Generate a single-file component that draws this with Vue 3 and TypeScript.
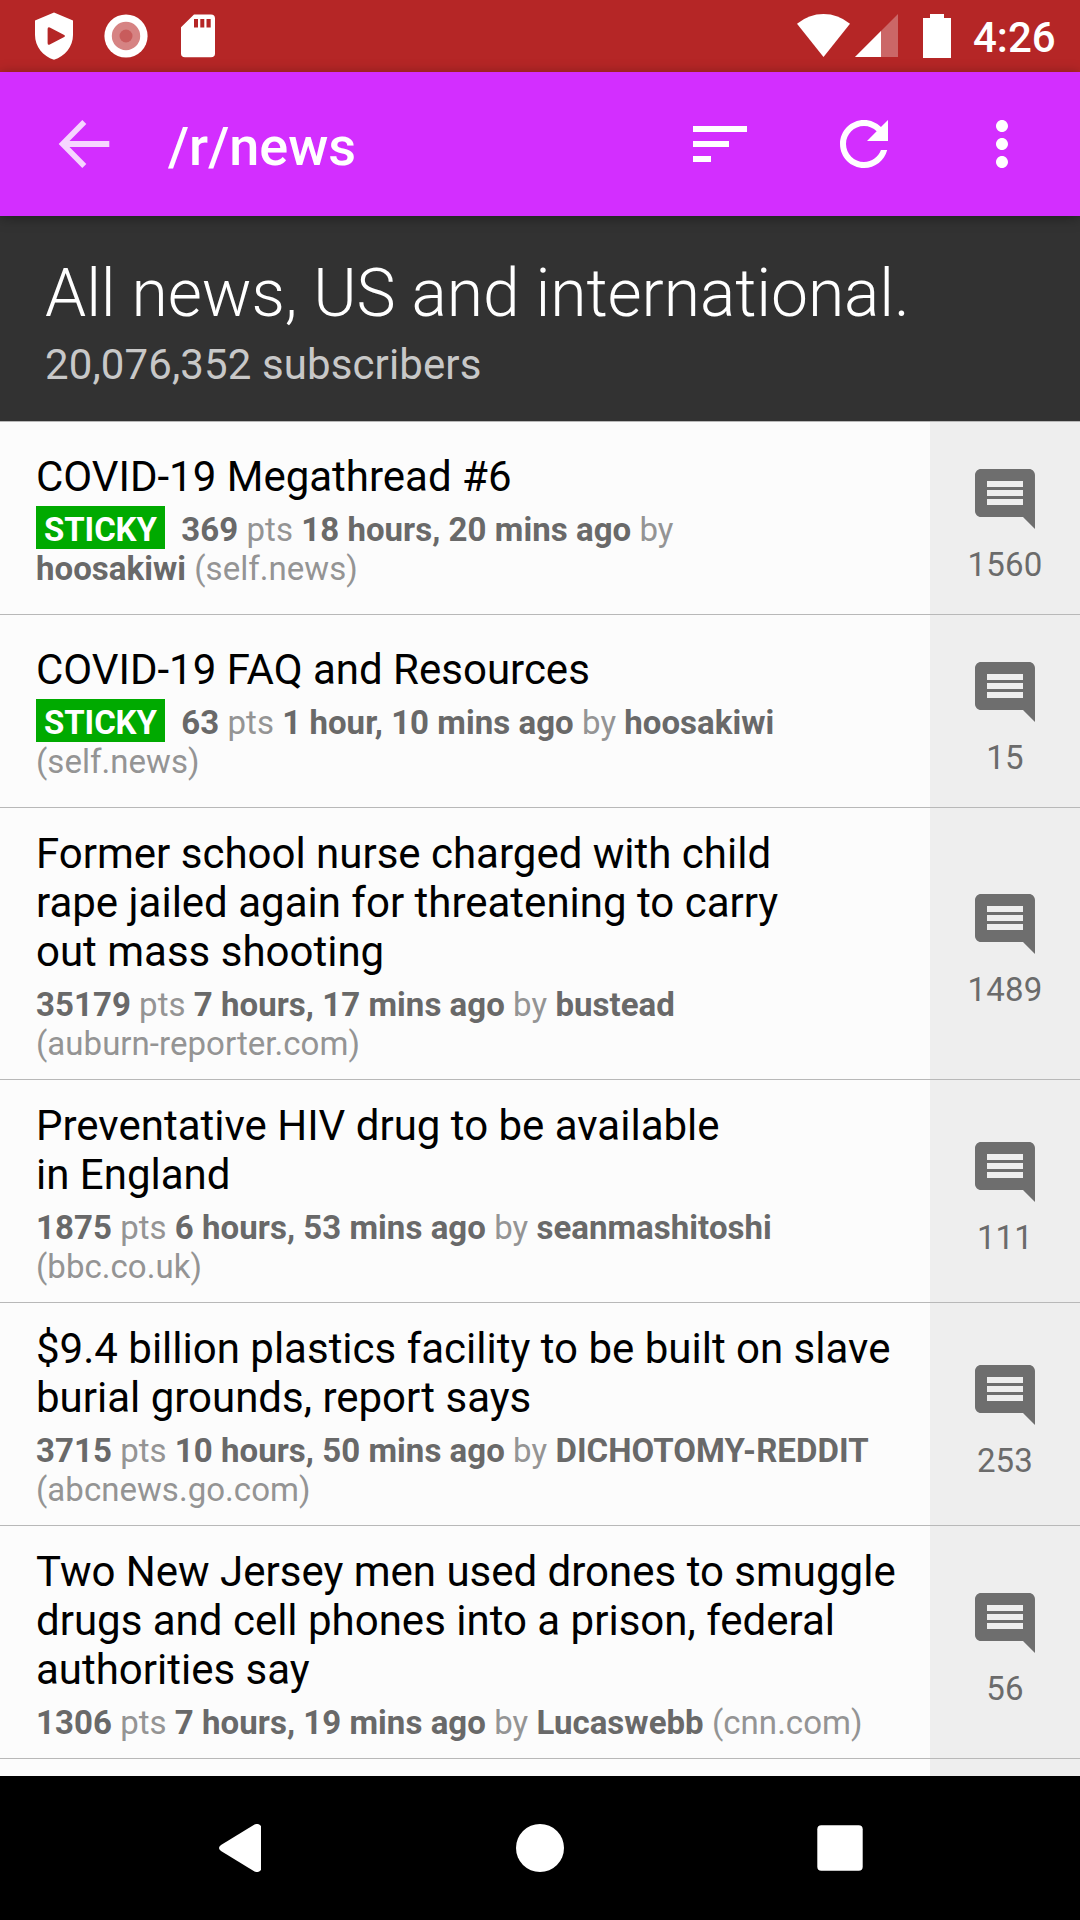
<script setup lang="ts">
interface Post {
  title: string[]
  sticky?: boolean
  points: number
  age: string
  author: string
  domain: string
  comments: number
  breakBefore?: 'author' | 'domain'
}

const posts: Post[] = [
  { title: ['COVID-19 Megathread #6'], sticky: true, points: 369, age: '18 hours, 20 mins ago', author: 'hoosakiwi', domain: 'self.news', comments: 1560, breakBefore: 'author' },
  { title: ['COVID-19 FAQ and Resources'], sticky: true, points: 63, age: '1 hour, 10 mins ago', author: 'hoosakiwi', domain: 'self.news', comments: 15, breakBefore: 'domain' },
  { title: ['Former school nurse charged with child', 'rape jailed again for threatening to carry', 'out mass shooting'], points: 35179, age: '7 hours, 17 mins ago', author: 'bustead', domain: 'auburn-reporter.com', comments: 1489, breakBefore: 'domain' },
  { title: ['Preventative HIV drug to be available', 'in England'], points: 1875, age: '6 hours, 53 mins ago', author: 'seanmashitoshi', domain: 'bbc.co.uk', comments: 111, breakBefore: 'domain' },
  { title: ['$9.4 billion plastics facility to be built on slave', 'burial grounds, report says'], points: 3715, age: '10 hours, 50 mins ago', author: 'DICHOTOMY-REDDIT', domain: 'abcnews.go.com', comments: 253, breakBefore: 'domain' },
  { title: ['Two New Jersey men used drones to smuggle', 'drugs and cell phones into a prison, federal', 'authorities say'], points: 1306, age: '7 hours, 19 mins ago', author: 'Lucaswebb', domain: 'cnn.com', comments: 56 },
]
</script>

<template>
  <div class="screen">
    <div class="status">
      <svg class="shield" width="40" height="72" viewBox="34 0 40 72">
        <path fill="#fff" fill-rule="evenodd" d="M54 12.6 73 20.5V35C73 46.500 65 56.500 54 59.700 43 56.500 35 46.500 35 35V20.500ZM49.800 27.400Q47.600 26.500 47.600 29V43Q47.600 45.500 49.800 44.600L64.200 37Q66 36 64.200 35Z" />
      </svg>
      <svg class="record" width="44" height="72" viewBox="104 0 44 72">
        <circle cx="126" cy="36" r="21.600" fill="#fff" />
        <circle cx="126" cy="36" r="14.200" fill="#d68383" />
        <circle cx="126" cy="36" r="6.500" fill="#c85c5c" />
      </svg>
      <svg class="sd" width="36" height="72" viewBox="180 0 36 72">
        <path fill="#fff" fill-rule="evenodd" d="M194 14.500H211Q215 14.500 215 18.500V53.500Q215 57.300 211 57.300H185Q181 57.300 181 53.500V27.300ZM194 19V27.500H198V19ZM200.300 19V27.500H204.300V19ZM206.500 19V27.500H210.700V19Z" />
      </svg>
      <svg class="wifi" width="54" height="72" viewBox="797 0 54 72">
        <path fill="#fff" d="M797 23.700Q809 14 823.500 14T850 23.700L823.500 57Z" />
      </svg>
      <svg class="signal" width="44" height="72" viewBox="855 0 44 72">
        <path fill="#fff" fill-opacity=".3" d="M898 14V57H855Z" />
        <path fill="#fff" d="M881 31V57H855Z" />
      </svg>
      <svg class="battery" width="28" height="72" viewBox="923 0 28 72">
        <path fill="#fff" d="M930 14H944V18H951V58H923V18H930Z" />
      </svg>
      <span class="clock">4:26</span>
    </div>

    <header class="toolbar">
      <svg class="back" width="52" height="48" viewBox="0 0 52 48">
        <path fill="#fff" fill-opacity=".8" d="M24.300 0 28.300 4 11.500 21H51.300V27H11.500L28.300 44 24.300 48 .7 24Z" />
      </svg>
      <h1>/r/news</h1>
      <svg class="sort" width="72" height="72" viewBox="0 0 24 24">
        <path fill="#fff" d="M3 18h6v-2H3v2zM3 6v2h18V6H3zm0 7h12v-2H3v2z" />
      </svg>
      <svg class="refresh" width="72" height="72" viewBox="0 0 24 24">
        <path fill="#fff" d="M17.650 6.350C16.200 4.900 14.210 4 12 4c-4.420 0-7.990 3.580-7.990 8s3.570 8 7.990 8c3.730 0 6.840-2.550 7.730-6h-2.080c-.82 2.330-3.040 4-5.650 4-3.310 0-6-2.690-6-6s2.690-6 6-6c1.660 0 3.140.69 4.220 1.780L13 11h7V4l-2.350 2.350z" />
      </svg>
      <svg class="more" width="72" height="72" viewBox="0 0 24 24">
        <path fill="#fff" d="M12 8c1.100 0 2-.9 2-2s-.9-2-2-2-2 .9-2 2 .9 2 2 2zm0 2c-1.100 0-2 .9-2 2s.9 2 2 2 2-.9 2-2-.9-2-2-2zm0 6c-1.100 0-2 .9-2 2s.9 2 2 2 2-.9 2-2-.9-2-2-2z" />
      </svg>
    </header>

    <section class="banner">
      <div class="headline">All news, US and international.</div>
      <div class="subs">20,076,352 subscribers</div>
    </section>

    <main class="list">
      <article v-for="post in posts" :key="post.title[0]" class="row">
        <div class="body">
          <h2><span v-for="line in post.title" :key="line" class="line">{{ line }}</span></h2>
          <p class="meta">
            <template v-if="post.sticky"><span class="sticky">&nbsp;STICKY&nbsp;</span>&nbsp;&nbsp;</template><b>{{ post.points }}</b> pts <b>{{ post.age }}</b> by <br v-if="post.breakBefore === 'author'"><b>{{ post.author }}</b>{{ ' ' }}<br v-if="post.breakBefore === 'domain'">({{ post.domain }})
          </p>
        </div>
        <div class="comments">
          <svg width="72" height="72" viewBox="0 0 24 24">
            <path fill="#6e6e6e" d="M21.990 4c0-1.100-.89-2-1.990-2H4c-1.100 0-2 .9-2 2v12c0 1.100.9 2 2 2h14l4 4-.010-18zM18 14H6v-2h12v2zm0-3H6V9h12v2zm0-3H6V6h12v2z" />
          </svg>
          <span>{{ post.comments }}</span>
        </div>
      </article>
      <div class="row stub">
        <div class="body"></div>
        <div class="comments"></div>
      </div>
    </main>

    <nav class="nav">
      <svg width="48" height="48" viewBox="0 0 48 48">
        <path fill="#fff" d="M38.500 .5Q42.500 -1.200 45 2V46Q42.500 49.200 38.500 47.500L5 27Q1 24 5 21Z" />
      </svg>
      <svg width="48" height="48" viewBox="0 0 48 48"><circle cx="24" cy="24" r="24" fill="#fff" /></svg>
      <svg width="48" height="48" viewBox="0 0 48 48"><rect x="1.300" y="1.300" width="45.400" height="45.400" rx="4" fill="#fff" /></svg>
    </nav>
  </div>
</template>

<style>
body {
  margin: 0;
}
</style>

<style scoped>
.screen {
  width: 1080px;
  height: 1920px;
  display: flex;
  flex-direction: column;
  overflow: hidden;
  background: #fcfcfc;
  font-family: Roboto, "Noto Sans", sans-serif;
}
svg {
  display: block;
  flex: none;
}
.status {
  height: 72px;
  flex: none;
  display: flex;
  background: #b52626;
}
.shield { margin-left: 34px; }
.record { margin-left: 30px; }
.sd { margin-left: 32px; }
.wifi { margin-left: auto; }
.signal { margin-left: 4px; }
.battery { margin-left: 24px; }
.clock {
  width: 107px;
  margin-left: 22px;
  color: #fff;
  font-size: 42px;
  font-weight: 500;
  line-height: 49px;
  padding-top: 13px;
}
.toolbar {
  position: relative;
  z-index: 1;
  height: 144px;
  flex: none;
  display: flex;
  align-items: center;
  background: #d32eff;
  box-shadow: 0 2px 12px rgba(0, 0, 0, .35);
}
.back { margin-left: 58px; }
h1 {
  flex: 1;
  margin: 5px 0 0 58px;
  color: #fff;
  font-size: 54px;
  font-weight: 500;
  line-height: 64px;
}
.refresh { margin-left: 72px; }
.more { margin: 0 42px 0 66px; }
.banner {
  height: 205px;
  flex: none;
  box-sizing: border-box;
  padding: 39px 45px 0;
  background: #323232;
}
.headline {
  color: #fff;
  font-size: 66px;
  font-weight: 300;
  line-height: 77px;
  letter-spacing: -.11px;
}
.subs {
  margin-top: 8px;
  color: #c8c8c8;
  font-size: 42px;
  line-height: 49px;
  letter-spacing: .11px;
}
.list {
  flex: 1;
  min-height: 0;
  display: flex;
  flex-direction: column;
  overflow: hidden;
}
.row {
  flex: none;
  display: flex;
  border-top: 1px solid #b8b8b8;
}
.stub {
  flex: 1;
}
.body {
  flex: 1;
  min-height: 192px;
  box-sizing: border-box;
  padding: 20px 0 16px 36px;
  display: flex;
  flex-direction: column;
  justify-content: center;
}
.row:nth-child(n + 3) .body {
  padding-top: 21px;
}
.row.stub .body {
  min-height: 0;
  padding: 0;
}
h2 {
  margin: 0;
  color: #000;
  font-size: 42px;
  font-weight: 400;
  line-height: 49px;
}
.line {
  display: block;
  white-space: nowrap;
}
.meta {
  margin: 9px 0 0;
  color: #949494;
  font-size: 33px;
  line-height: 39px;
  letter-spacing: .04px;
  white-space: nowrap;
}
.meta b {
  color: #696969;
  font-weight: 700;
}
.sticky {
  padding-top: 4px;
  background: #0a0;
  color: #fff;
  font-weight: 700;
  letter-spacing: -.12px;
}
.comments {
  width: 150px;
  flex: none;
  box-sizing: border-box;
  padding-top: 10px;
  display: flex;
  flex-direction: column;
  align-items: center;
  justify-content: center;
  gap: 10px;
  background: #eee;
  color: #6b6b6b;
  font-size: 33px;
  line-height: 39px;
  letter-spacing: .2px;
}
.nav {
  height: 144px;
  flex: none;
  display: flex;
  align-items: center;
  justify-content: center;
  gap: 252px;
  background: #000;
}
</style>
